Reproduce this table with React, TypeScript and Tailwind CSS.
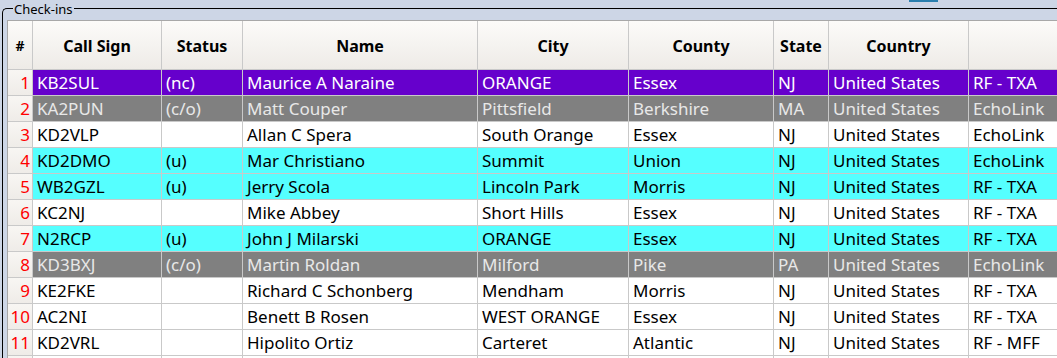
import React from "react";

type Row = {
  n: number | "";
  call: string;
  status: string;
  name: string;
  city: string;
  county: string;
  state: string;
  country: string;
  mode: string;
  kind: "purple" | "gray" | "white" | "cyan";
};

const rows: Row[] = [
  { n: 1, call: "KB2SUL", status: "(nc)", name: "Maurice A Naraine", city: "ORANGE", county: "Essex", state: "NJ", country: "United States", mode: "RF - TXA", kind: "purple" },
  { n: 2, call: "KA2PUN", status: "(c/o)", name: "Matt Couper", city: "Pittsfield", county: "Berkshire", state: "MA", country: "United States", mode: "EchoLink", kind: "gray" },
  { n: 3, call: "KD2VLP", status: "", name: "Allan C Spera", city: "South Orange", county: "Essex", state: "NJ", country: "United States", mode: "EchoLink", kind: "white" },
  { n: 4, call: "KD2DMO", status: "(u)", name: "Mar Christiano", city: "Summit", county: "Union", state: "NJ", country: "United States", mode: "EchoLink", kind: "cyan" },
  { n: 5, call: "WB2GZL", status: "(u)", name: "Jerry Scola", city: "Lincoln Park", county: "Morris", state: "NJ", country: "United States", mode: "RF - TXA", kind: "cyan" },
  { n: 6, call: "KC2NJ", status: "", name: "Mike Abbey", city: "Short Hills", county: "Essex", state: "NJ", country: "United States", mode: "RF - TXA", kind: "white" },
  { n: 7, call: "N2RCP", status: "(u)", name: "John J Milarski", city: "ORANGE", county: "Essex", state: "NJ", country: "United States", mode: "RF - TXA", kind: "cyan" },
  { n: 8, call: "KD3BXJ", status: "(c/o)", name: "Martin Roldan", city: "Milford", county: "Pike", state: "PA", country: "United States", mode: "EchoLink", kind: "gray" },
  { n: 9, call: "KE2FKE", status: "", name: "Richard C Schonberg", city: "Mendham", county: "Morris", state: "NJ", country: "United States", mode: "RF - TXA", kind: "white" },
  { n: 10, call: "AC2NI", status: "", name: "Benett B Rosen", city: "WEST ORANGE", county: "Essex", state: "NJ", country: "United States", mode: "RF - TXA", kind: "white" },
  { n: 11, call: "KD2VRL", status: "", name: "Hipolito Ortiz", city: "Carteret", county: "Atlantic", state: "NJ", country: "United States", mode: "RF - MFF", kind: "white" },
  { n: "", call: "", status: "", name: "", city: "", county: "", state: "", country: "", mode: "", kind: "white" },
];

const kindCls: Record<Row["kind"], string> = {
  purple: "bg-[#6600cc] text-white",
  gray: "bg-[#808080] text-[#e8e8e8]",
  white: "bg-white text-black",
  cyan: "bg-[#55ffff] text-black",
};

const headers = ["#", "Call Sign", "Status", "Name", "City", "County", "State", "Country", ""];

const gridCols =
  "grid grid-cols-[25px_129px_81px_235px_151px_145px_55px_140px_140px]";

export default function App() {
  return (
    <div
      className="w-[1057px] h-[358px] overflow-hidden bg-[#cdd6e6] flex flex-col"
      style={{ fontFamily: '"Noto Sans", "Open Sans", sans-serif' }}
    >
      <div className="h-[8px] shrink-0 flex">
        <div className="ml-[909px] w-[29px] h-[2px] bg-[#2a7fae]" />
      </div>
      <div className="relative flex-1 ml-[2px] border-l border-t border-black rounded-tl-[5px] pl-[4px] pt-[11px] min-h-0">
        <div className="absolute left-[10px] top-[-7px] px-[1px] bg-[#cdd6e6] text-[13px] leading-[14px] text-black">
          Check-ins
        </div>
        <div className="border-l border-t border-[#a8a8a8] bg-white h-full overflow-hidden">
          <div className={gridCols}>
            {headers.map((h, i) => (
              <div
                key={i}
                className={`h-[49px] pt-[1px] flex items-center justify-center border-b border-r border-[#c9c9c9] bg-gradient-to-b from-[#fcfbf9] to-[#eeebe7] font-bold text-black ${
                  i === 0 ? "text-[14px]" : "text-[16px]"
                }`}
              >
                {h}
              </div>
            ))}
          </div>
          {rows.map((r, idx) => {
            const cells = [r.call, r.status, r.name, r.city, r.county, r.state, r.country, r.mode];
            return (
              <div key={idx} className={gridCols}>
                <div className="h-[26px] flex items-center justify-end pr-[2px] border-b border-r border-[#c9c9c9] bg-gradient-to-b from-[#f8f6f3] to-[#efece8] text-[#ff0000] text-[17px] leading-none">
                  {r.n}
                </div>
                {cells.map((c, i) => (
                  <div
                    key={i}
                    className={`h-[26px] flex items-center pl-[4px] border-b border-r border-[#c9c9c9] text-[17px] leading-none whitespace-nowrap overflow-hidden ${kindCls[r.kind]}`}
                  >
                    {c}
                  </div>
                ))}
              </div>
            );
          })}
        </div>
      </div>
    </div>
  );
}
